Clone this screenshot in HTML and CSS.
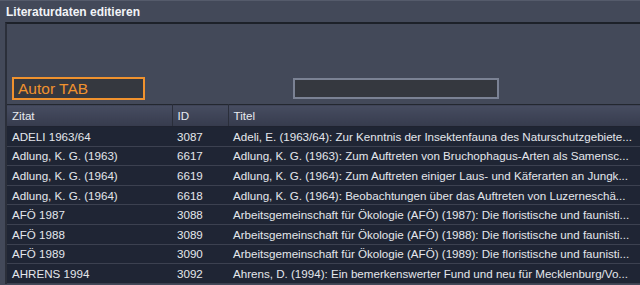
FILE: index.html
```html
<!DOCTYPE html>
<html lang="de">
<head>
  <meta charset="UTF-8" />
  <title>Literaturdaten editieren</title>
  <link rel="stylesheet" href="styles.css">
</head>
<body>
  <div class="titlebar">Literaturdaten editieren</div>

  <div class="panel">
    <div class="toolbar">
      <div class="field field-active">Autor TAB</div>
      <div class="field field-search"></div>
    </div>

    <table class="grid">
      <colgroup>
        <col class="col-zitat" />
        <col class="col-id" />
        <col />
      </colgroup>
      <thead>
        <tr>
          <th>Zitat</th>
          <th>ID</th>
          <th>Titel</th>
        </tr>
      </thead>
      <tbody>
        <tr>
          <td>ADELI 1963/64</td>
          <td>3087</td>
          <td>Adeli, E. (1963/64): Zur Kenntnis der Insektenfauna des Naturschutzgebiete...</td>
        </tr>
        <tr>
          <td>Adlung, K. G. (1963)</td>
          <td>6617</td>
          <td>Adlung, K. G. (1963): Zum Auftreten von Bruchophagus-Arten als Samensc...</td>
        </tr>
        <tr>
          <td>Adlung, K. G. (1964)</td>
          <td>6619</td>
          <td>Adlung, K. G. (1964): Zum Auftreten einiger Laus- und Käferarten an Jungk...</td>
        </tr>
        <tr>
          <td>Adlung, K. G. (1964)</td>
          <td>6618</td>
          <td>Adlung, K. G. (1964): Beobachtungen über das Auftreten von Luzerneschä...</td>
        </tr>
        <tr>
          <td>AFÖ 1987</td>
          <td>3088</td>
          <td>Arbeitsgemeinschaft für Ökologie (AFÖ) (1987): Die floristische und faunisti...</td>
        </tr>
        <tr>
          <td>AFÖ 1988</td>
          <td>3089</td>
          <td>Arbeitsgemeinschaft für Ökologie (AFÖ) (1988): Die floristische und faunisti...</td>
        </tr>
        <tr>
          <td>AFÖ 1989</td>
          <td>3090</td>
          <td>Arbeitsgemeinschaft für Ökologie (AFÖ) (1989): Die floristische und faunisti...</td>
        </tr>
        <tr>
          <td>AHRENS 1994</td>
          <td>3092</td>
          <td>Ahrens, D. (1994): Ein bemerkenswerter Fund und neu für Mecklenburg/Vo...</td>
        </tr>
      </tbody>
    </table>
  </div>
</body>
</html>
```

FILE: styles.css
```css
/* Reset */
* {
  box-sizing: border-box;
}

html, body {
  margin: 0;
  height: 100%;
  overflow: hidden;
  background: #434959;
  font-family: "Liberation Sans", Arial, sans-serif;
  color: #e4e7ec;
}

/* Window title */
.titlebar {
  height: 22px;
  padding: 4px 0 0 6px;
  border-top: 1px solid #555b6b;
  font-size: 12px;
  font-weight: bold;
  color: #f2f4f7;
  background: #434959;
}

/* Panel */
.panel {
  margin-left: 5px;
  border-top: 2px solid #1d2129;
  border-left: 2px solid #2b2f3a;
  background: #434959;
}

.toolbar {
  height: 80px;
  display: flex;
  align-items: flex-start;
  padding-top: 53px;
}

.field {
  height: 23px;
  background: #35383f;
}

.field-active {
  width: 133px;
  margin-left: 5px;
  border: 2px solid #f0922e;
  color: #f0922e;
  font-size: 15.5px;
  line-height: 19px;
  padding-left: 4px;
}

.field-search {
  width: 206px;
  height: 21px;
  margin-top: 1px;
  margin-left: 148px;
  border: 2px solid #7b8294;
}

/* Table */
.grid {
  width: 100%;
  border-collapse: collapse;
  table-layout: fixed;
  border-top: 1px solid #23272f;
  font-size: 11.6px;
}

.col-zitat {
  width: 165px;
}

.col-id {
  width: 56px;
}

.grid th {
  height: 22px;
  padding: 0 0 0 5px;
  text-align: left;
  font-weight: normal;
  color: #e8ebf0;
  background: linear-gradient(#474d61, #363b4d);
  border-right: 1px solid #2a2e3a;
  border-bottom: 1px solid #1f2330;
}

.grid th:last-child {
  border-right: none;
}

.grid td {
  height: 19.6px;
  padding: 0 0 0 5px;
  white-space: nowrap;
  overflow: hidden;
  background: #1f2534;
  border-bottom: 1px solid #3c4150;
}

.grid td:last-child {
  padding-right: 2px;
}
```
